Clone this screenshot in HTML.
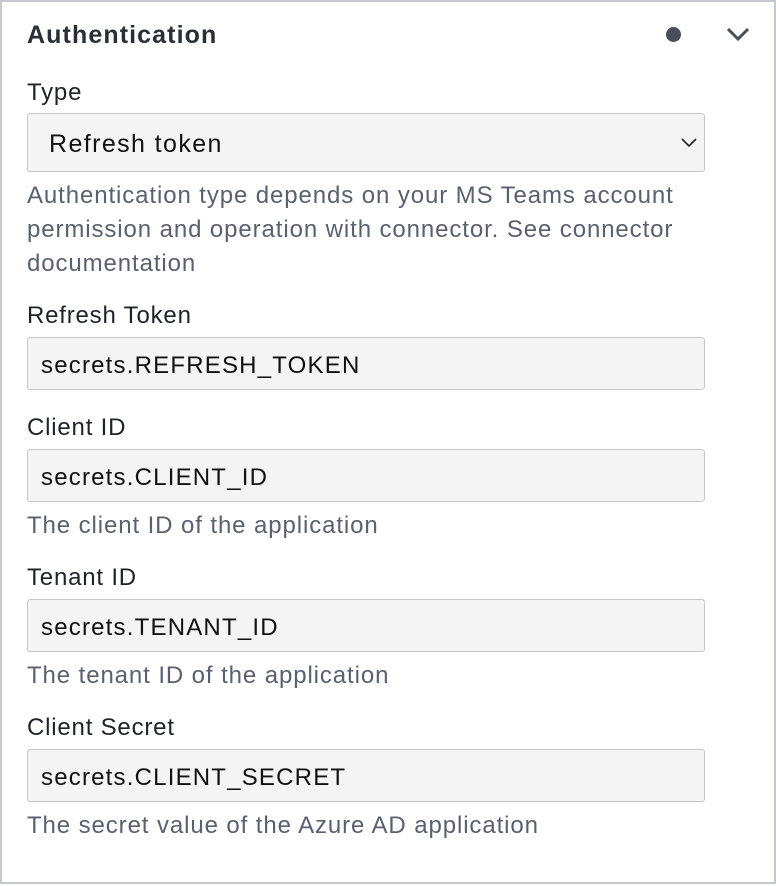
<!DOCTYPE html>
<html><head><meta charset="utf-8"><style>
html,body{margin:0;padding:0;background:#fff;}
body{width:776px;height:886px;position:relative;overflow:hidden;font-family:"Liberation Sans",sans-serif;}
.frame{position:absolute;left:0;top:0;width:772px;height:880px;border:2px solid #c6c8cd;}
.t{position:absolute;white-space:nowrap;}
.title{left:27px;top:21px;font-size:25px;font-weight:bold;letter-spacing:1.1px;color:#2a2e35;}
.lbl{left:27px;font-size:24px;letter-spacing:0.8px;color:#1f2328;}
.help{left:27px;font-size:24px;letter-spacing:0.9px;color:#5a6070;line-height:34px;}
.box{position:absolute;left:27px;width:676px;background:#f4f4f4;border:1px solid #c4c6ca;border-radius:3px;}
.val{position:absolute;left:13px;font-size:24px;letter-spacing:1.2px;color:#111;}
</style></head><body>
<div class="frame"></div>
<div class="t title">Authentication</div>
<div style="position:absolute;left:666px;top:27px;width:15px;height:15px;border-radius:50%;background:#4a4e5a"></div>
<svg style="position:absolute;left:726px;top:26px" width="24" height="16" viewBox="0 0 24 16"><path d="M2 3 L12 13 L22 3" fill="none" stroke="#4a4e5a" stroke-width="3"/></svg>
<div class="t lbl" style="top:79px">Type</div>
<div class="box" style="top:113px;height:57px"><span class="val" style="left:21px;top:16px;font-size:25px;letter-spacing:1.4px">Refresh token</span>
<svg style="position:absolute;left:653px;top:24px" width="16" height="10" viewBox="0 0 16 10"><path d="M1 1 L8 8 L15 1" fill="none" stroke="#222" stroke-width="1.6"/></svg></div>
<div class="t help" style="top:179px">Authentication type depends on your MS Teams account<br>permission and operation with connector. See connector<br>documentation</div>
<div class="t lbl" style="top:302px">Refresh Token</div>
<div class="box" style="top:337px;height:51px"><span class="val" style="top:14px">secrets.REFRESH_TOKEN</span></div>
<div class="t lbl" style="top:414px">Client ID</div>
<div class="box" style="top:449px;height:51px"><span class="val" style="top:14px">secrets.CLIENT_ID</span></div>
<div class="t help" style="top:509px">The client ID of the application</div>
<div class="t lbl" style="top:564px">Tenant ID</div>
<div class="box" style="top:599px;height:51px"><span class="val" style="top:14px">secrets.TENANT_ID</span></div>
<div class="t help" style="top:659px">The tenant ID of the application</div>
<div class="t lbl" style="top:714px">Client Secret</div>
<div class="box" style="top:749px;height:51px"><span class="val" style="top:14px">secrets.CLIENT_SECRET</span></div>
<div class="t help" style="top:809px">The secret value of the Azure AD application</div>
</body></html>
